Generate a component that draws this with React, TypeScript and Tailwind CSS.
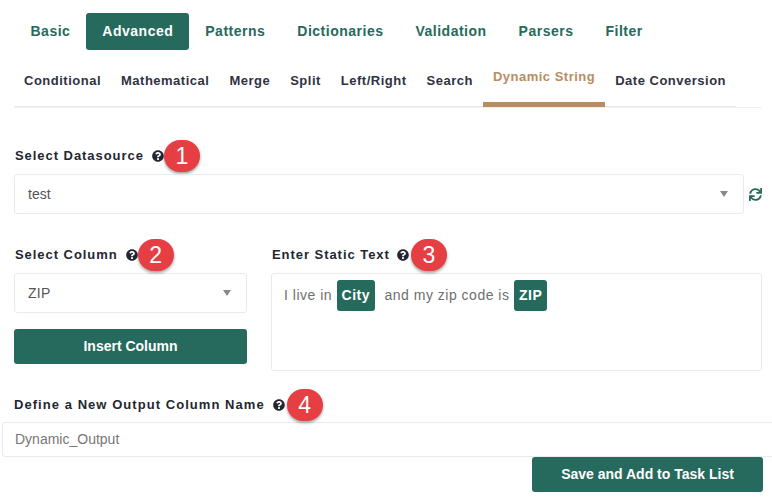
import { FaQuestionCircle, FaSync } from "react-icons/fa";

const main = ["Basic", "Advanced", "Patterns", "Dictionaries", "Validation", "Parsers", "Filter"];
const sub = ["Conditional", "Mathematical", "Merge", "Split", "Left/Right", "Search", "Dynamic String", "Date Conversion"];

function Label({
  text,
  n,
  className = "",
  textClass = "tracking-[0.95px]",
  iconClass = "ml-[8px]",
  badgeClass = "ml-0",
}: {
  text: string;
  n: number;
  className?: string;
  textClass?: string;
  iconClass?: string;
  badgeClass?: string;
}) {
  return (
    <div className={`flex items-center h-8 text-[13px] font-bold text-[#23272f] ${className}`}>
      <span className={textClass}>{text}</span>
      <FaQuestionCircle className={`w-[12px] h-[12px] text-[#23272f] ${iconClass}`} />
      <span className={`w-[36px] h-[32px] rounded-full bg-[#e53f43] text-white text-[23px] font-normal tracking-normal flex items-center justify-center shadow-[0_2px_3px_rgba(0,0,0,0.35)] ${badgeClass}`}>
        {n}
      </span>
    </div>
  );
}

function Arrow() {
  return <span className="w-0 h-0 border-x-[4.5px] border-x-transparent border-t-[6px] border-t-[#8a8a8a]" />;
}

function Chip({ children }: { children: string }) {
  return (
    <span className="inline-flex items-center justify-center h-[31px] px-[4.5px] rounded-[3px] bg-[#256a5c] text-white text-[14px] font-bold tracking-[0.5px]">
      {children}
    </span>
  );
}

export default function App() {
  return (
    <div className="relative w-[772px] h-[503px] overflow-hidden bg-white font-['Liberation_Sans',Arial,sans-serif]">
      <div className="flex pl-[14.5px] pt-[13px] h-[50px]">
        {main.map((t) => (
          <div
            key={t}
            className={`h-[37px] px-[16px] flex items-center rounded-[3px] text-[14px] font-bold tracking-[0.5px] ${
              t === "Advanced" ? "bg-[#256a5c] text-white" : "text-[#256a5c]"
            }`}
          >
            {t}
          </div>
        ))}
      </div>
      <div className="ml-[14px] mr-[10px] h-[58px] border-b border-[#eef0f1]">
        <div className="w-[722px] h-[57px] flex border-b border-[#e9eaec]">
          {sub.map((t) =>
            t === "Dynamic String" ? (
              <div
                key={t}
                className="h-[57px] px-[10px] pt-[18px] border-b-[5px] border-[#b98d5f] text-[13px] font-bold tracking-[0.5px] text-[#b98d5f] leading-[18px]"
              >
                {t}
              </div>
            ) : (
              <div
                key={t}
                className="h-[56px] px-[10px] pt-[22px] text-[13px] font-bold tracking-[0.5px] text-[#30323f] leading-[18px]"
              >
                {t}
              </div>
            )
          )}
        </div>
      </div>

      <div className="pl-[15px] mt-[32px]">
        <Label text="Select Datasource" n={1} />
      </div>
      <div className="flex items-center pl-[14px] mt-[2px]">
        <div className="w-[730px] h-[40px] border border-[#e8ebed] rounded-[3px] flex items-center justify-between pl-[13px] pr-[15px] text-[14px] text-[#555]">
          <span>test</span>
          <Arrow />
        </div>
        <FaSync className="ml-[5px] w-[13px] h-[13px] text-[#256a5c]" />
      </div>

      <div className="flex pl-[14px] mt-[25px]">
        <div className="w-[233px] mr-[24px]">
          <Label text="Select Column" n={2} className="pl-px" />
          <div className="mt-[2px] h-[40px] border border-[#e8ebed] rounded-[3px] flex items-center justify-between pl-[13px] pr-[15px] text-[14px] text-[#555] tracking-[0.3px]">
            <span>ZIP</span>
            <Arrow />
          </div>
          <div className="mt-[16px] h-[35px] rounded-[3px] bg-[#256a5c] text-white text-[14px] font-bold flex items-center justify-center">
            Insert Column
          </div>
        </div>
        <div className="flex-1 pl-px">
          <Label text="Enter Static Text" n={3} iconClass="ml-[7px]" badgeClass="ml-[2px]" />
          <div className="mt-[2px] w-[491px] h-[98px] -ml-px border border-[#e8ebed] rounded-[3px] pl-[12px] pt-[6px] flex items-start text-[14px] text-[#6f6f6f] tracking-[0.5px]">
            <span className="mt-[5px]">I live in</span>
            <span className="ml-[5px]"><Chip>City</Chip></span>
            <span className="ml-[10px] mt-[5px]">and my zip code is</span>
            <span className="ml-[5px]"><Chip>ZIP</Chip></span>
          </div>
        </div>
      </div>

      <div className="pl-[14px] mt-[18px]">
        <Label text="Define a New Output Column Name" n={4} textClass="tracking-[1.05px]" iconClass="ml-[8px]" badgeClass="ml-[2px]" />
      </div>
      <div className="ml-[2px] mt-[1px] h-[35px] border border-[#e8ebed] border-r-0 rounded-l-[3px] flex items-center pl-[12px] text-[14px] text-[#777]">
        Dynamic_Output
      </div>
      <div className="flex justify-end pr-[9px]">
        <div className="w-[231px] h-[35px] rounded-[3px] bg-[#256a5c] text-white text-[14px] font-bold flex items-center justify-center">
          Save and Add to Task List
        </div>
      </div>
    </div>
  );
}
